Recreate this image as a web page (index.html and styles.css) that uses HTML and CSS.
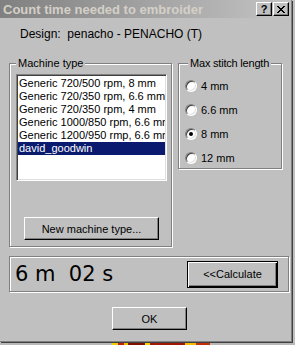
FILE: index.html
```html
<!DOCTYPE html>
<html lang="en">
<head>
    <meta charset="UTF-8">
    <meta name="viewport" content="width=device-width, initial-scale=1.0">
    <title>Count time needed to embroider</title>
    <link rel="stylesheet" href="styles.css">
</head>
<body>
    <div class="window">
        <div class="titlebar">
            <span class="title">Count time needed to embroider</span>
            <div class="caption-btns">
                <span class="cbtn help">?</span>
                <span class="cbtn close">
                    <svg width="8" height="7" viewBox="0 0 8 7" shape-rendering="crispEdges">
                        <path d="M0 0h2v1h-2zM6 0h2v1h-2zM1 1h2v1h-2zM5 1h2v1h-2zM2 2h4v1h-4zM3 3h2v1h-2zM2 4h4v1h-4zM1 5h2v1h-2zM5 5h2v1h-2zM0 6h2v1h-2zM6 6h2v1h-2z" fill="#000"/>
                    </svg>
                </span>
            </div>
        </div>

        <p class="design">Design:&nbsp; penacho - PENACHO (T)</p>

        <div class="groups">
            <fieldset class="group machine">
                <legend>Machine type</legend>
                <ul class="listbox">
                    <li>Generic 720/500 rpm, 8 mm</li>
                    <li>Generic 720/350 rpm, 6.6 mm</li>
                    <li>Generic 720/350 rpm, 4 mm</li>
                    <li>Generic 1000/850 rpm, 6.6 mm</li>
                    <li>Generic 1200/950 rmp, 6.6 mm</li>
                    <li class="selected">david_goodwin</li>
                </ul>
                <button class="btn new-btn">New machine type...</button>
            </fieldset>

            <fieldset class="group stitch">
                <legend>Max stitch length</legend>
                <div class="radios">
                    <label class="radio"><span class="dot"></span>4 mm</label>
                    <label class="radio"><span class="dot"></span>6.6 mm</label>
                    <label class="radio checked"><span class="dot"></span>8 mm</label>
                    <label class="radio"><span class="dot"></span>12 mm</label>
                </div>
            </fieldset>
        </div>

        <div class="time-box">
            <span class="time">6 m&nbsp; 02 s</span>
            <button class="btn default">&lt;&lt;Calculate</button>
        </div>

        <div class="ok-row">
            <button class="btn ok">OK</button>
        </div>
    </div>
    <div class="desktop"></div>
</body>
</html>
```

FILE: styles.css
```css
* {
    box-sizing: border-box;
}
html, body {
    margin: 0;
}
body {
    width: 295px;
    height: 345px;
    overflow: hidden;
    background: #c0c0c0;
    font-family: "Liberation Sans", Arial, sans-serif;
    font-size: 11px;
    color: #000;
}
.window {
    width: 292px;
    height: 342px;
    background: #c0c0c0;
    border-right: 1px solid #808080;
    border-bottom: 1px solid #808080;
    box-shadow: 1px 1px 0 #404040;
}
.titlebar {
    height: 18px;
    display: flex;
    align-items: center;
    justify-content: space-between;
    padding: 0 2px 0 3px;
    background: linear-gradient(to right, #808080, #c4c4c4);
}
.title {
    color: #d4d0c8;
    font-weight: bold;
    font-size: 13px;
}
.caption-btns {
    display: flex;
    gap: 1px;
}
.cbtn {
    width: 16px;
    height: 14px;
    display: flex;
    align-items: center;
    justify-content: center;
    background: #c0c0c0;
    border: 1px solid;
    border-color: #fff #000 #000 #fff;
    box-shadow: inset -1px -1px #808080;
    font-weight: bold;
    font-size: 11px;
    line-height: 1;
}
.design {
    margin: 10px 0 0 20px;
    font-size: 12px;
    line-height: 13px;
}
.groups {
    display: flex;
    gap: 6px;
    margin-top: 16px;
    padding-left: 9px;
}
.group {
    margin: 0;
    padding: 0;
    min-width: 0;
    border: 1px solid #808080;
    box-shadow: inset 1px 1px #fff, 1px 1px #fff;
}
.group legend {
    padding: 0 2px;
    margin-left: 6px;
    line-height: 13px;
    background: #c0c0c0;
}
.machine {
    width: 163px;
    height: 190px;
}
.stitch {
    width: 104px;
    height: 112px;
}
.stitch legend {
    margin-left: 9px;
    letter-spacing: -0.2px;
}
.listbox {
    list-style: none;
    margin: 4px 0 0 6px;
    padding: 2px 0 0;
    width: 151px;
    height: 107px;
    overflow: hidden;
    background: #fff;
    border: 1px solid;
    border-color: #808080 #fff #fff #808080;
    box-shadow: inset 1px 1px #404040, inset -1px -1px #dfdfdf;
}
.listbox li {
    height: 13px;
    line-height: 13px;
    padding-left: 1px;
    margin: 0 1px;
    font-size: 11px;
    white-space: nowrap;
    overflow: hidden;
}
.listbox li.selected {
    background: #0a1a6e;
    color: #fff;
}
.btn {
    font-family: "Liberation Sans", Arial, sans-serif;
    font-size: 11px;
    color: #000;
    background: #c0c0c0;
    padding: 0;
    border: 1px solid;
    border-color: #fff #000 #000 #fff;
    box-shadow: inset -1px -1px #808080;
}
.new-btn {
    display: block;
    margin: 36px 0 0 14px;
    width: 135px;
    height: 23px;
}
.radios {
    display: flex;
    flex-direction: column;
    gap: 11px;
    margin-top: 9px;
    padding-left: 6px;
}
.radio {
    display: flex;
    align-items: center;
    gap: 4px;
    height: 13px;
}
.dot {
    width: 12px;
    height: 12px;
    border-radius: 50%;
    background: #fff;
    border: 1px solid;
    border-color: #808080 #fff #fff #808080;
    box-shadow: inset 1px 1px #404040, inset -1px -1px #dfdfdf;
    display: flex;
    align-items: center;
    justify-content: center;
}
.radio.checked .dot::after {
    content: "";
    width: 4px;
    height: 4px;
    border-radius: 50%;
    background: #000;
}
.time-box {
    margin: 9px 0 0 9px;
    width: 280px;
    height: 36px;
    display: flex;
    align-items: center;
    justify-content: space-between;
    padding: 0 10px 0 5px;
    border: 1px solid #808080;
    box-shadow: inset 1px 1px #fff, 1px 1px #fff;
}
.time {
    font-family: "DejaVu Sans", sans-serif;
    font-size: 21px;
    line-height: 1;
    margin-top: 1px;
}
.default {
    width: 91px;
    height: 27px;
    border: 1px solid #000;
    box-shadow: inset 1px 1px #fff, inset -1px -1px #000, inset -2px -2px #808080;
}
.ok-row {
    margin-top: 15px;
    padding-left: 112px;
}
.ok {
    width: 75px;
    height: 23px;
}
.desktop {
    height: 3px;
    margin-top: 1px;
    background: linear-gradient(to right,
        #b8b8b8 0 112px,
        #f0d000 112px 118px,
        #c02000 118px 124px,
        #f0c000 124px 128px,
        #801000 128px 145px,
        #f8d800 145px 150px,
        #a01800 150px 185px,
        #f0c000 185px 196px,
        #c03000 196px 210px,
        #b8b8b8 210px);
}
```
